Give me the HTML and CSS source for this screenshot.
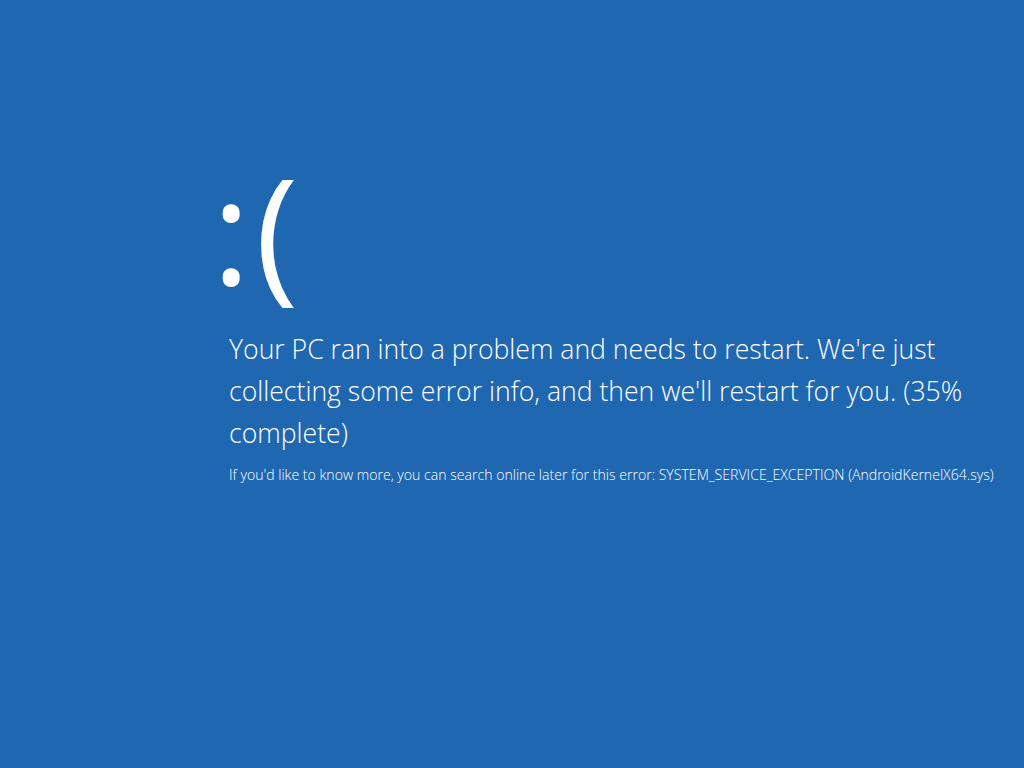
FILE: index.html
```html
<!DOCTYPE html>
<html lang="en">
<head>
<meta charset="utf-8">
<title>Error</title>
<link rel="stylesheet" href="styles.css">
</head>
<body>
<main class="screen">
  <div class="face">:(</div>
  <p class="message">Your PC ran into a problem and needs to restart. We're just collecting some error info, and then we'll restart for you. (35% complete)</p>
  <p class="detail">If you'd like to know more, you can search online later for this error: SYSTEM_SERVICE_EXCEPTION (AndroidKernelX64.sys)</p>
</main>
</body>
</html>
```
FILE: styles.css
```css
html, body {
  margin: 0;
  padding: 0;
  height: 100%;
  background: #1f67b1;
}
body {
  font-family: "Open Sans", "Noto Sans", sans-serif;
  font-weight: 300;
  color: #ffffff;
}
.screen {
  padding: 129px 0 0 229px;
  box-sizing: border-box;
  height: 100%;
}
.face {
  margin-left: -17px;
  font-size: 146px;
  line-height: 199px;
  font-weight: 400;
  letter-spacing: 5px;
}
.message {
  margin: 0;
  width: 770px;
  font-size: 26.6px;
  line-height: 42px;
}
.detail {
  margin: 12px 0 0;
  font-size: 14.1px;
  line-height: 18px;
  white-space: nowrap;
}
```
